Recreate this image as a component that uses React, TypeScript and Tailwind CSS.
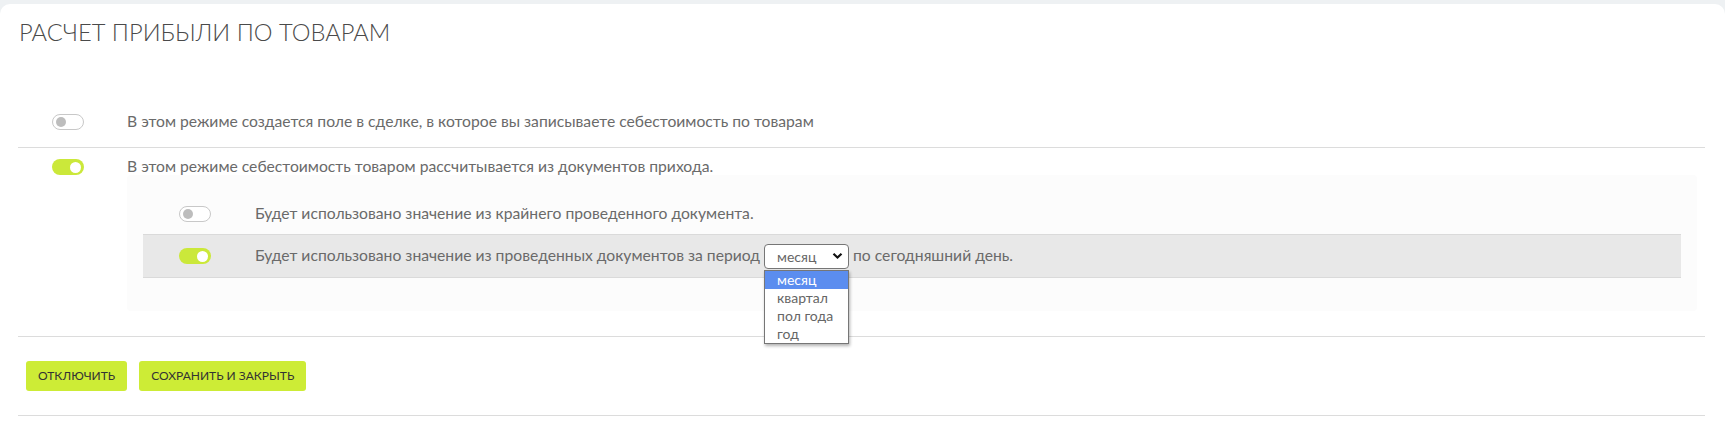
import React from "react";

const font = { fontFamily: "Lato, 'Noto Sans', 'Open Sans', sans-serif" };

function Toggle({ on }: { on: boolean }) {
  return on ? (
    <div className="flex h-[16px] w-[32px] items-center justify-end rounded-full bg-[#cbe83a] pr-[3px]">
      <div className="h-[11px] w-[11px] rounded-full bg-white" />
    </div>
  ) : (
    <div className="flex h-[16px] w-[32px] items-center rounded-full border border-[#c8c8c8] bg-white pl-[3px]">
      <div className="h-[10px] w-[10px] rounded-full bg-[#bdbdbd]" />
    </div>
  );
}

function PeriodSelect() {
  const options = ["месяц", "квартал", "пол года", "год"];
  return (
    <span className="relative mx-[4px] inline-flex">
      <span className="flex h-[25px] w-[85px] items-center justify-between rounded-[4px] border border-[#767676] bg-white pl-[12px] pr-[5px] text-[14px] text-[#666]">
        месяц
        <svg width="11" height="8" viewBox="0 0 11 8">
          <path d="M1.5 1.8 L5.5 5.6 L9.5 1.8" fill="none" stroke="#111" strokeWidth="2.2" />
        </svg>
      </span>
      <span className="absolute left-0 top-[26px] z-10 flex w-[85px] flex-col border border-[#767676] bg-white shadow-[1px_2px_3px_rgba(0,0,0,0.3)]">
        {options.map((o, i) => (
          <span
            key={o}
            className={
              "h-[18px] pl-[12px] text-[14px] leading-[18px] " +
              (i === 0 ? "bg-[#5b8def] text-white" : "text-[#666]")
            }
          >
            {o}
          </span>
        ))}
      </span>
    </span>
  );
}

export default function App() {
  return (
    <div className="min-h-[433px] bg-[#eef1f3] pt-[4px]" style={font}>
      <div className="h-[429px] rounded-t-[10px] bg-white pl-[18px] pr-[20px]">
        <h1 className="pt-[13px] pl-[1px] text-[23.7px] font-light leading-[30px] text-[#4a4a4a]">
          РАСЧЕТ ПРИБЫЛИ ПО ТОВАРАМ
        </h1>

        <div className="mt-[52px] flex h-[49px] items-center border-b border-[#dcdcdc] pb-[3px]">
          <div className="w-[109px] pl-[34px]">
            <Toggle on={false} />
          </div>
          <span className="text-[15.7px] text-[#6a6a6a]">
            В этом режиме создается поле в сделке, в которое вы записываете себестоимость по товарам
          </span>
        </div>

        <div className="border-b border-[#dcdcdc] pb-[25px]">
          <div className="flex h-[27px] items-center pt-[11px]">
            <div className="w-[109px] pl-[34px]">
              <Toggle on={true} />
            </div>
            <span className="text-[15.7px] text-[#6a6a6a]">
              В этом режиме себестоимость товаром рассчитывается из документов прихода.
            </span>
          </div>

          <div className="ml-[109px] mr-[8px] rounded-[4px] bg-[#fcfcfc] px-[16px] pt-[18px] pb-[33px]">
            <div className="flex h-[41px] items-center">
              <div className="w-[112px] pl-[36px]">
                <Toggle on={false} />
              </div>
              <span className="text-[15.7px] text-[#6a6a6a]">
                Будет использовано значение из крайнего проведенного документа.
              </span>
            </div>
            <div className="flex h-[44px] items-center border-y border-[#dadada] bg-[#e8e8e8]">
              <div className="w-[112px] pl-[36px]">
                <Toggle on={true} />
              </div>
              <span className="flex items-center text-[15.7px] text-[#6a6a6a]">
                Будет использовано значение из проведенных документов за период
                <PeriodSelect />
                по сегодняшний день.
              </span>
            </div>
          </div>
        </div>

        <div className="flex h-[79px] items-center gap-[12px] border-b border-[#dcdcdc] pl-[8px]">
          <button className="h-[30px] rounded-[3px] bg-[#cdec36] px-[12px] text-[12px] text-[#333]">
            ОТКЛЮЧИТЬ
          </button>
          <button className="h-[30px] rounded-[3px] bg-[#cdec36] px-[12px] text-[12px] text-[#333]">
            СОХРАНИТЬ И ЗАКРЫТЬ
          </button>
        </div>
      </div>
    </div>
  );
}
